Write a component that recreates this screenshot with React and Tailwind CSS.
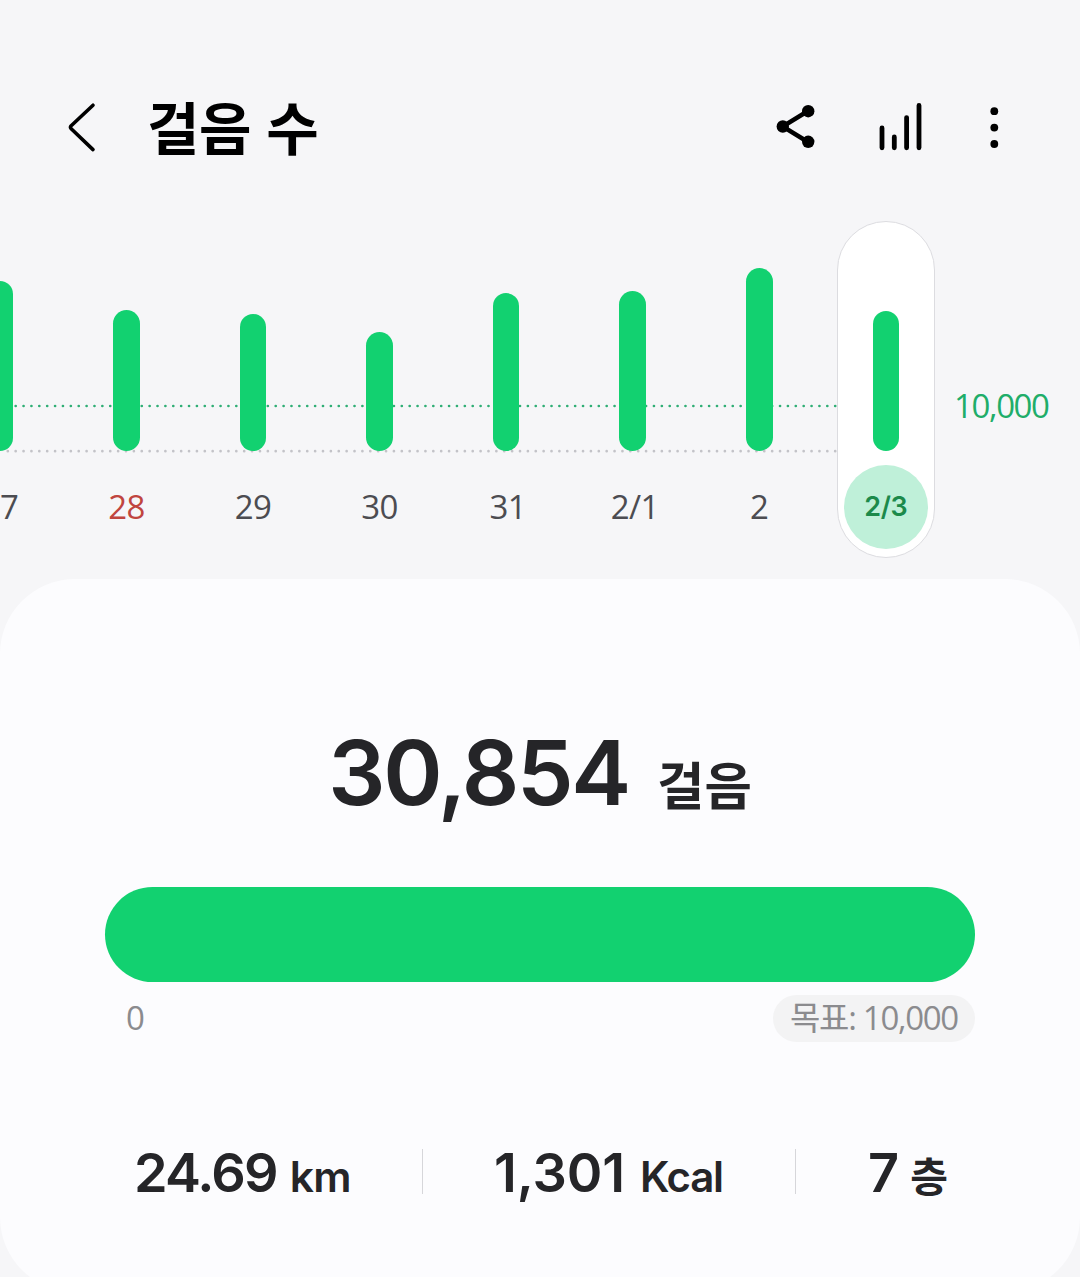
const days = [
  { label: '27', height: 170 },
  { label: '28', height: 141, holiday: true },
  { label: '29', height: 137 },
  { label: '30', height: 119 },
  { label: '31', height: 158, nudge: 'pl-[3px]' },
  { label: '2/1', height: 160.5, nudge: 'pl-[4px]' },
  { label: '2', height: 183 },
  { label: '2/3', height: 140.5, selected: true },
];

function Header() {
  return (
    <header className="flex h-[221px] items-start pt-[94px]">
      <svg className="ml-[60px] h-[68px] w-[44px] shrink-0" viewBox="0 0 44 68" fill="none" stroke="#000" strokeWidth="3.6" strokeLinecap="round" strokeLinejoin="round" aria-label="뒤로">
        <path d="M33 11.2 L11.2 31.8 Q9.8 33.3 11.2 34.8 L33 55.6" />
      </svg>
      <h1 className="mt-[2px] ml-[43px] text-[57px] leading-[68px] font-bold tracking-[-0.4px] [word-spacing:2px] whitespace-nowrap text-black">걸음 수</h1>
      <svg className="ml-auto h-[68px] w-[60px] shrink-0" viewBox="0 0 60 68" aria-label="공유">
        <path d="M48 17 L22.6 32.5 L48 48" fill="none" stroke="#000" strokeWidth="4.4" />
        <circle cx="48.2" cy="17.2" r="6.2" />
        <circle cx="22.8" cy="32.5" r="6.2" />
        <circle cx="48.2" cy="47.8" r="6.2" />
      </svg>
      <svg className="ml-[44px] h-[68px] w-[70px] shrink-0" viewBox="0 0 70 68" fill="none" stroke="#000" strokeWidth="4.8" strokeLinecap="round" aria-label="통계">
        <path d="M18 34 V53.8 M30.3 43 V53.8 M42.6 23.6 V53.8 M55 11.4 V53.8" />
      </svg>
      <svg className="mr-[60px] ml-[46px] h-[68px] w-[40px] shrink-0" viewBox="0 0 40 68" aria-label="더보기">
        <circle cx="14.3" cy="17.2" r="3.9" />
        <circle cx="14.3" cy="33.6" r="3.9" />
        <circle cx="14.3" cy="50" r="3.9" />
      </svg>
    </header>
  );
}

function Day({ day }) {
  const bar = <div className="w-[26.5px] rounded-full bg-[#12d170]" style={{ height: day.height }} />;
  if (day.selected) {
    return (
      <div className="flex w-[126.55px] shrink-0 justify-center">
        <div className="flex h-[337px] w-[98px] flex-col items-center rounded-full border border-[#dcdce0] bg-white">
          <div className="flex h-[229px] items-end">{bar}</div>
          <div className="mt-[14px] flex h-[84px] w-[84px] shrink-0 items-center justify-center rounded-full bg-[#bff0d9] text-[27px] font-semibold tracking-[-0.3px] text-[#1c8a4b]">
            {day.label}
          </div>
        </div>
      </div>
    );
  }
  return (
    <div className="flex w-[126.55px] shrink-0 flex-col items-center">
      <div className="flex h-[230px] items-end">{bar}</div>
      <span className={`mt-[36px] font-['Open_Sans',sans-serif] text-[33px] leading-[40px] tracking-[-0.6px] ${day.nudge ?? ''} ${day.holiday ? 'text-[#c0453f]' : 'text-[#4c4c51]'}`}>{day.label}</span>
    </div>
  );
}

function Chart() {
  return (
    <section className="relative flex h-[358px]">
      <svg className="absolute top-[180px] left-0 h-[56px] w-[837px]" viewBox="0 0 837 56" fill="none" strokeWidth="2.7" strokeLinecap="round" strokeDasharray="0 7.88">
        <path d="M7.8 5 H837" stroke="#2fae75" />
        <path d="M7.8 50.2 H837" stroke="#c3c3c8" />
      </svg>
      <div className="relative ml-[-63.3px] flex">
        {days.map((day) => <Day key={day.label} day={day} />)}
      </div>
      <span className="mt-[165px] ml-[5px] font-['Open_Sans',sans-serif] text-[33px] leading-[40px] tracking-[-1.4px] text-[#20ad69]">10,000</span>
    </section>
  );
}

function Stat({ value, unit, className, valueClass, unitClass }) {
  return (
    <div className={`flex items-baseline whitespace-nowrap ${className}`}>
      <span className={`text-[54px] font-semibold ${valueClass}`}>{value}</span>
      <span className={`font-semibold ${unitClass}`}>{unit}</span>
    </div>
  );
}

function Summary() {
  return (
    <section className="h-[713px] rounded-[75px] bg-[#fcfcfe] px-[105px] pt-[134px] text-[#252528]">
      <div className="flex h-[120px] items-baseline justify-center leading-[120px] whitespace-nowrap">
        <span className="text-[90px] font-semibold tracking-[-2.3px]">30,854</span>
        <span className="ml-[28px] text-[51.5px] font-bold">걸음</span>
      </div>
      <div className="mt-[54px] h-[95px] rounded-full bg-[#12d170]" />
      <div className="mt-[13px] flex items-center justify-between font-['Open_Sans','Noto_Sans_CJK_KR',sans-serif] text-[33px] leading-[45px] text-[#8b8b8e]">
        <span className="ml-[21px] pb-[2px]">0</span>
        <span className="flex h-[47px] w-[202px] items-center justify-center rounded-full bg-[#f3f3f4] pb-[2px] tracking-[-1.3px] whitespace-nowrap">목표: 10,000</span>
      </div>
      <div className="mt-[95px] flex h-[68px] items-center leading-[68px]">
        <Stat value="24.69" unit="km" className="w-[317px] pl-[29px] pt-[7px]" valueClass="tracking-[-1.8px]" unitClass="ml-[13px] text-[42.5px] tracking-[-0.8px]" />
        <div className="h-[45px] w-px bg-[#d6d6da]" />
        <Stat value="1,301" unit="Kcal" className="w-[372px] pl-[71px] pt-[7px]" valueClass="tracking-[-0.1px]" unitClass="ml-[15px] text-[42px] tracking-[-1.3px]" />
        <div className="h-[45px] w-px bg-[#d6d6da]" />
        <Stat value="7" unit="층" className="pl-[72px] pt-[7px]" valueClass="tracking-[-2px]" unitClass="ml-[13px] text-[41px]" />
      </div>
    </section>
  );
}

export default function App() {
  return (
    <main className="h-[1277px] w-[1080px] overflow-hidden bg-[#f6f6f8] font-['Inter','Noto_Sans_CJK_KR',sans-serif]">
      <Header />
      <Chart />
      <Summary />
    </main>
  );
}
